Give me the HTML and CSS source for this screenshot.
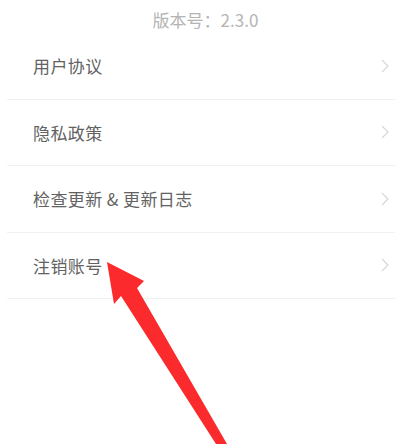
FILE: index.html
```
<!DOCTYPE html>
<html lang="zh">
<head>
<meta charset="utf-8">
<link rel="stylesheet" href="styles.css">
</head>
<body>
<div class="page">
  <div class="version">版本号：2.3.0</div>
  <ul class="list">
    <li class="row"><span class="label">用户协议</span><svg class="chev" width="8" height="14" viewBox="0 0 8 14"><polyline points="1,1 7,7 1,13" fill="none" stroke="#d6d6d6" stroke-width="1.1"/></svg></li>
    <li class="row"><span class="label">隐私政策</span><svg class="chev" width="8" height="14" viewBox="0 0 8 14"><polyline points="1,1 7,7 1,13" fill="none" stroke="#d6d6d6" stroke-width="1.1"/></svg></li>
    <li class="row"><span class="label">检查更新 &amp; 更新日志</span><svg class="chev" width="8" height="14" viewBox="0 0 8 14"><polyline points="1,1 7,7 1,13" fill="none" stroke="#d6d6d6" stroke-width="1.1"/></svg></li>
    <li class="row"><span class="label">注销账号</span><svg class="chev" width="8" height="14" viewBox="0 0 8 14"><polyline points="1,1 7,7 1,13" fill="none" stroke="#d6d6d6" stroke-width="1.1"/></svg></li>
  </ul>
  <svg class="arrow" width="395" height="444" viewBox="0 0 395 444"><polygon points="107,262 144,281 137,288 227,444 216,444 121,296 114,304" fill="#fb2a2c"/></svg>
</div>
</body>
</html>
```
FILE: styles.css
```
html, body {
  margin: 0;
  padding: 0;
  background: #ffffff;
}
.page {
  position: relative;
  width: 395px;
  height: 444px;
  overflow: hidden;
  font-family: "Noto Sans CJK SC", "Noto Sans", sans-serif;
}
.version {
  padding-top: 6px;
  height: 27px;
  line-height: 27px;
  text-align: center;
  font-size: 17px;
  color: #b4b4b4;
  padding-left: 16px;
}
.list {
  list-style: none;
  margin: 0 0 0 7px;
  padding: 0;
}
.row {
  height: 65.5px;
  border-bottom: 1px solid #f0f0f0;
  display: flex;
  align-items: center;
  justify-content: space-between;
  padding: 0 6px 0 26px;
}
.label {
  font-size: 17px;
  letter-spacing: 0.4px;
  color: #626262;
}
.chev {
  display: block;
}
.arrow {
  position: absolute;
  left: 0;
  top: 0;
}
```
